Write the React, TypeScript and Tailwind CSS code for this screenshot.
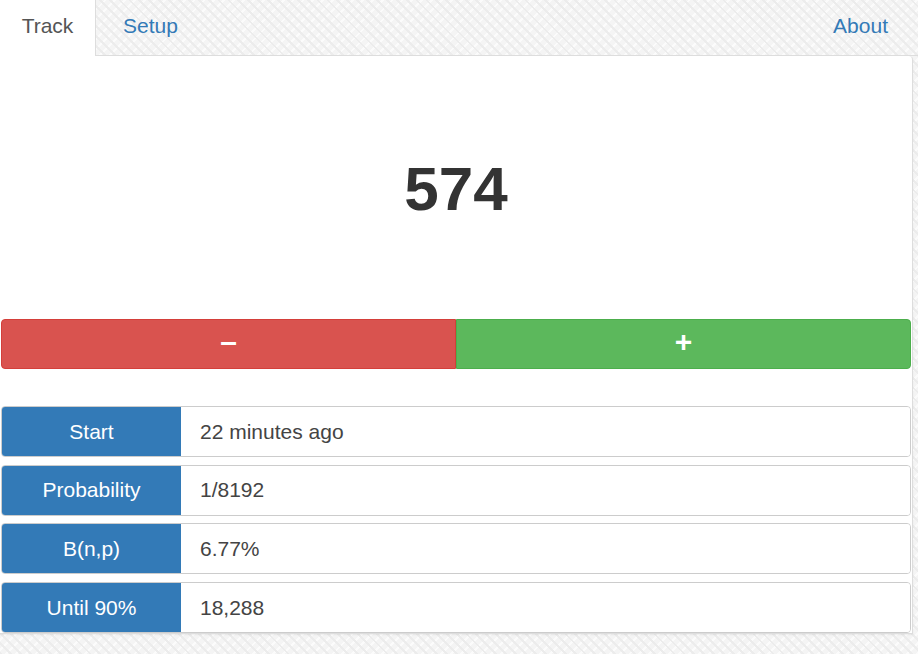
import React, { useState } from 'react';

const stats = [
  { label: 'Start', value: '22 minutes ago' },
  { label: 'Probability', value: '1/8192' },
  { label: 'B(n,p)', value: '6.77%' },
  { label: 'Until 90%', value: '18,288' },
];

const weave =
  'bg-[#f4f4f4] bg-[image:repeating-linear-gradient(45deg,#ececec_0px,#ececec_2px,transparent_2px,transparent_7px),repeating-linear-gradient(-45deg,#fbfbfb_0px,#fbfbfb_2px,transparent_2px,transparent_7px)]';

const App: React.FC = () => {
  const [count, setCount] = useState(574);

  return (
    <div className={`min-h-[654px] w-[918px] font-['Liberation_Sans',Arial,sans-serif] ${weave}`}>
      {/* Tabs */}
      <nav className="flex h-[56px] items-stretch">
        <div className="flex w-[96px] items-center justify-center border-r border-[#ddd] bg-white pb-[4px] text-[21px] text-[#555]">
          Track
        </div>
        <div className="flex flex-1 items-center justify-between border-b border-[#ddd] pb-[3px] pl-[27px] pr-[30px] text-[21px] text-[#337ab7]">
          <span>Setup</span>
          <span>About</span>
        </div>
      </nav>

      {/* Panel */}
      <main className="mr-[5px] flex h-[578px] flex-col rounded-tr-[4px] border-r border-b border-[#ddd] bg-white px-[1px] shadow-[0_1px_2px_rgba(0,0,0,0.06)]">
        <div className="flex h-[263px] items-center justify-center pt-[2px]">
          <span className="text-[62px] font-bold text-[#333]">{count}</span>
        </div>

        <div className="flex h-[50px]">
          <button
            onClick={() => setCount(c => c - 1)}
            className="flex flex-1 items-center justify-center rounded-l-[4px] border border-[#d43f3a] bg-[#d9534f] pb-[5px] text-[30px] font-bold text-white"
          >
            –
          </button>
          <button
            onClick={() => setCount(c => c + 1)}
            className="flex flex-1 items-center justify-center rounded-r-[4px] border border-[#4cae4c] bg-[#5cb85c] pb-[5px] text-[30px] font-bold text-white"
          >
            +
          </button>
        </div>

        <div className="mt-[37px] flex flex-col gap-[7.7px]">
          {stats.map(s => (
            <div
              key={s.label}
              className="flex h-[51px] overflow-hidden rounded-[4px] border border-[#ccc] text-[21px] shadow-[inset_0_1px_1px_rgba(0,0,0,0.075)]"
            >
              <div className="flex w-[179px] items-center justify-center bg-[#337ab7] text-white">
                {s.label}
              </div>
              <div className="flex flex-1 items-center bg-white pl-[19px] text-[#444]">{s.value}</div>
            </div>
          ))}
        </div>
      </main>
    </div>
  );
};

export default App;
